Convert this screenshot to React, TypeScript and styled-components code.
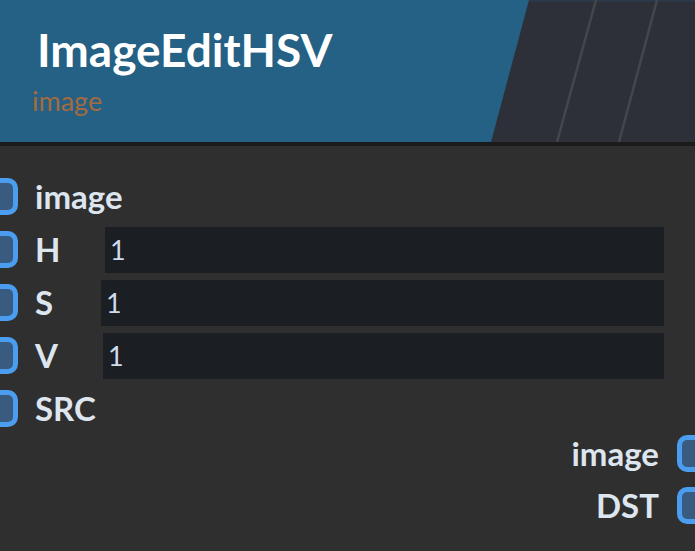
import React from 'react';
import styled, { createGlobalStyle } from 'styled-components';

const colors = {
    headerBlue: '#246185',
    headerDark: '#2e3039',
    stripe: '#45464b',
    separator: '#1b1b1b',
    body: '#2f2f2f',
    label: '#dde5ef',
    subtitle: '#a56a3f',
    inputBg: '#1b1e22',
    inputText: '#cfdcec',
    portBorder: '#4b9df0',
    portFill: '#3a5b80'
};

const GlobalStyle = createGlobalStyle`
  html, body {
    margin: 0;
    padding: 0;
    background: ${colors.body};
    overflow: hidden;
  }
  body {
    font-family: Lato, "Noto Sans", sans-serif;
  }
`;

const Node = styled.div`
  width: 695px;
  height: 551px;
  display: flex;
  flex-direction: column;
  background: ${colors.body};
  overflow: hidden;
`;

const Header = styled.div`
  position: relative;
  flex: none;
  height: 146px;
  box-sizing: border-box;
  background: ${colors.headerBlue};
  border-bottom: 4px solid ${colors.separator};
  padding: 22px 0 0 37px;
  overflow: hidden;
`;

const HeaderDecor = styled.svg`
  position: absolute;
  top: 0;
  right: 0;
`;

const Title = styled.div`
  position: relative;
  color: #ffffff;
  font-size: 46px;
  font-weight: 700;
  line-height: 56px;
`;

const Subtitle = styled.div`
  position: relative;
  margin: 8px 0 0 -5px;
  color: ${colors.subtitle};
  font-size: 27px;
  line-height: 30px;
`;

const Body = styled.div`
  display: flex;
  flex-direction: column;
  padding-top: 27px;
`;

const Inputs = styled.div`
  display: flex;
  flex-direction: column;
  gap: 7px;
`;

const Outputs = styled.div`
  display: flex;
  flex-direction: column;
  gap: 6px;
  margin-top: -1px;
`;

const Row = styled.div<{ $out?: boolean }>`
  display: flex;
  align-items: center;
  height: 46px;
  justify-content: ${p => (p.$out ? 'flex-end' : 'flex-start')};
`;

const Port = styled.div<{ $out?: boolean }>`
  flex: none;
  width: 37px;
  height: 37px;
  box-sizing: border-box;
  border: 5px solid ${colors.portBorder};
  border-radius: 10px;
  background: ${colors.portFill};
  margin-left: ${p => (p.$out ? '18px' : '-19px')};
  margin-right: ${p => (p.$out ? '-19px' : '17px')};
`;

const Label = styled.span<{ $width?: number }>`
  flex: none;
  width: ${p => (p.$width ? `${p.$width}px` : 'auto')};
  color: ${colors.label};
  font-size: 33px;
  font-weight: 700;
  line-height: 46px;
`;

const Field = styled.div`
  flex: none;
  height: 46px;
  margin-top: 1px;
  margin-right: 31px;
  padding-left: 5px;
  box-sizing: border-box;
  background: ${colors.inputBg};
  color: ${colors.inputText};
  font-size: 27px;
  line-height: 46px;
`;

const inputs = [
    { name: 'image' },
    { name: 'H', value: '1', left: 105 },
    { name: 'S', value: '1', left: 101 },
    { name: 'V', value: '1', left: 103 },
    { name: 'SRC' }
];

const outputs = ['image', 'DST'];

export default function App(): JSX.Element {
    return (
        <Node>
            <GlobalStyle />
            <Header>
                <HeaderDecor width="205" height="142" viewBox="0 0 205 142">
                    <polygon points="39,0 205,0 205,142 1,142" fill={colors.headerDark} />
                    <line x1="39" y1="0.5" x2="205" y2="0.5" stroke="#2b3a4c" strokeWidth="2" />
                    <line x1="106" y1="0" x2="67" y2="142" stroke={colors.stripe} strokeWidth="2.5" />
                    <line x1="167" y1="0" x2="129" y2="142" stroke={colors.stripe} strokeWidth="2.5" />
                </HeaderDecor>
                <Title>ImageEditHSV</Title>
                <Subtitle>image</Subtitle>
            </Header>
            <Body>
                <Inputs>
                    {inputs.map(i => (
                        <Row key={i.name}>
                            <Port />
                            <Label $width={i.left ? i.left - 35 : undefined}>{i.name}</Label>
                            {i.value && i.left && (
                                <Field style={{ width: 664 - i.left }}>{i.value}</Field>
                            )}
                        </Row>
                    ))}
                </Inputs>
                <Outputs>
                    {outputs.map(o => (
                        <Row key={o} $out>
                            <Label>{o}</Label>
                            <Port $out />
                        </Row>
                    ))}
                </Outputs>
            </Body>
        </Node>
    );
}
